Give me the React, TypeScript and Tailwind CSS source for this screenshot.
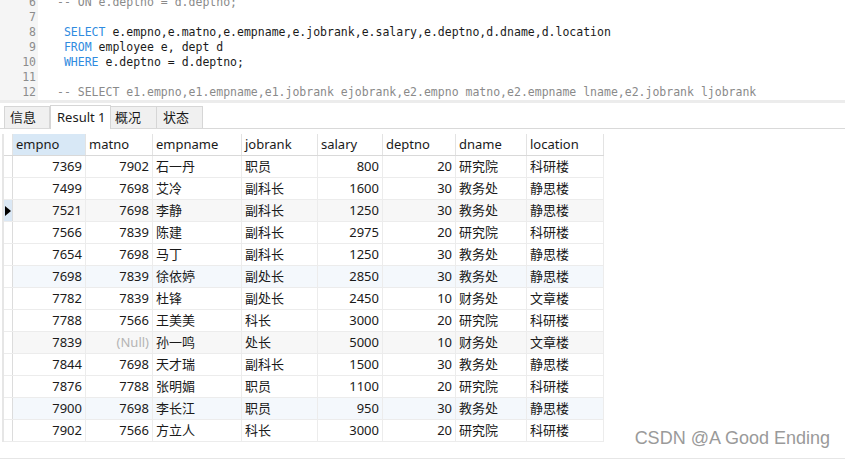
import React from "react";

const rows: string[][] = [
  ["7369", "7902", "石一丹", "职员", "800", "20", "研究院", "科研楼"],
  ["7499", "7698", "艾冷", "副科长", "1600", "30", "教务处", "静思楼"],
  ["7521", "7698", "李静", "副科长", "1250", "30", "教务处", "静思楼"],
  ["7566", "7839", "陈建", "副科长", "2975", "20", "研究院", "科研楼"],
  ["7654", "7698", "马丁", "副科长", "1250", "30", "教务处", "静思楼"],
  ["7698", "7839", "徐依婷", "副处长", "2850", "30", "教务处", "静思楼"],
  ["7782", "7839", "杜锋", "副处长", "2450", "10", "财务处", "文章楼"],
  ["7788", "7566", "王美美", "科长", "3000", "20", "研究院", "科研楼"],
  ["7839", "", "孙一鸣", "处长", "5000", "10", "财务处", "文章楼"],
  ["7844", "7698", "天才瑞", "副科长", "1500", "30", "教务处", "静思楼"],
  ["7876", "7788", "张明媚", "职员", "1100", "20", "研究院", "科研楼"],
  ["7900", "7698", "李长江", "职员", "950", "30", "教务处", "静思楼"],
  ["7902", "7566", "方立人", "科长", "3000", "20", "研究院", "科研楼"],
];

const headers = ["empno", "matno", "empname", "jobrank", "salary", "deptno", "dname", "location"];
const numeric = [true, true, false, false, true, true, false, false];

const code: { n: number; parts: [string, string][] }[] = [
  { n: 6, parts: [["c", "-- ON e.deptno = d.deptno;"]] },
  { n: 7, parts: [] },
  {
    n: 8,
    parts: [
      ["k", " SELECT"],
      ["t", " e.empno,e.matno,e.empname,e.jobrank,e.salary,e.deptno,d.dname,d.location"],
    ],
  },
  { n: 9, parts: [["k", " FROM"], ["t", " employee e, dept d"]] },
  { n: 10, parts: [["k", " WHERE"], ["t", " e.deptno = d.deptno;"]] },
  { n: 11, parts: [] },
  {
    n: 12,
    parts: [["c", "-- SELECT e1.empno,e1.empname,e1.jobrank ejobrank,e2.empno matno,e2.empname lname,e2.jobrank ljobrank"]],
  },
];

const partColor: Record<string, string> = {
  c: "text-[#8a8a8a]",
  k: "text-[#2f8be0]",
  t: "text-[#1a1a1a]",
};

const cols = "grid grid-cols-[9px_73px_67px_89px_76px_65px_73px_71px_77px]";

function rowBg(i: number) {
  if (i === 2 || i === 8) return "bg-[#f7f7f7]";
  if (i === 5 || i === 11) return "bg-[#f4f8fc]";
  return "bg-white";
}

export default function App() {
  return (
    <div className="relative w-[845px] h-[460px] overflow-hidden bg-white font-['Noto_Sans','Noto_Sans_CJK_SC',sans-serif]">
      {/* editor */}
      <div className="flex h-[100px] overflow-hidden">
        <div className="w-[38px] bg-[#f5f5f5] shrink-0">
          <div className="-mt-[5px]">
            {code.map((l) => (
              <div
                key={l.n}
                className="h-[15px] leading-[15px] pr-[2px] text-right text-[11.5px] text-[#8c8c8c] font-['DejaVu_Sans_Mono',monospace]"
              >
                {l.n}
              </div>
            ))}
          </div>
        </div>
        <div className="pl-[19px] -mt-[5px]">
          {code.map((l) => (
            <div
              key={l.n}
              className="h-[15px] leading-[15px] whitespace-pre text-[11.5px] font-['DejaVu_Sans_Mono',monospace]"
            >
              {l.parts.map(([k, s], j) => (
                <span key={j} className={partColor[k]}>
                  {s}
                </span>
              ))}
            </div>
          ))}
        </div>
      </div>
      <div className="h-[3px] bg-[#ececec]" />

      {/* tabs */}
      <div className="flex items-end h-[26px] pl-[4px] border-b border-[#d9d9d9] text-[13px] text-[#1a1a1a]">
        <div className="w-[46px] h-[22px] flex items-center pl-[5px] bg-[#f0f0f0] border border-b-0 border-[#d6d6d6]">信息</div>
        <div className="w-[61px] h-[24px] flex items-center pl-[6px] bg-white border border-b-0 border-[#d6d6d6] -mb-px">Result 1</div>
        <div className="w-[46px] h-[22px] flex items-center pl-[4px] bg-[#f0f0f0] border border-b-0 border-l-0 border-[#d6d6d6]">概况</div>
        <div className="w-[46px] h-[22px] flex items-center pl-[6px] bg-[#f0f0f0] border border-b-0 border-l-0 border-[#d6d6d6]">状态</div>
      </div>

      {/* grid */}
      <div className="pt-[5px] pl-[2px]">
        <div className="w-[602px] border-l-2 border-[#e6e6e6]">
          <div className={`${cols} h-[22px] text-[13px] text-[#1a1a1a] border-b border-[#d9d9d9]`}>
            <div className="border-r border-[#e3e3e3]" />
            {headers.map((h, i) => (
              <div
                key={h}
                className={`flex items-center pl-[3px] border-r border-[#e3e3e3] ${i === 0 ? "bg-[#d8e8f6]" : "bg-white"}`}
              >
                {h}
              </div>
            ))}
          </div>
          {rows.map((r, i) => (
            <div key={i} className={`${cols} h-[22px] text-[13px] text-[#1a1a1a] border-b border-[#ececec] ${rowBg(i)}`}>
              <div className={`flex items-center border-r border-[#dcdcdc] ${i === 2 ? "bg-[#dbe8f5]" : "bg-white"}`}>
                {i === 2 && (
                  <svg width="7" height="10" viewBox="0 0 7 10" className="ml-[1px]">
                    <path d="M0 0 L6 5 L0 10 Z" fill="#000" />
                  </svg>
                )}
              </div>
              {r.map((c, j) => (
                <div
                  key={j}
                  className={`flex items-center border-r border-[#ececec] whitespace-nowrap ${
                    numeric[j] ? "justify-end pr-[3px]" : "pl-[3px]"
                  }`}
                >
                  {c === "" ? <span className="text-[#b4b4b4]">(Null)</span> : c}
                </div>
              ))}
            </div>
          ))}
        </div>
      </div>

      <div className="mt-[16px] h-px bg-[#e6e6e6]" />

      <div className="absolute right-[15px] bottom-[8px] text-[18px] text-[#9a9a9a] font-['Liberation_Sans',sans-serif]">
        CSDN @A Good Ending
      </div>
    </div>
  );
}
